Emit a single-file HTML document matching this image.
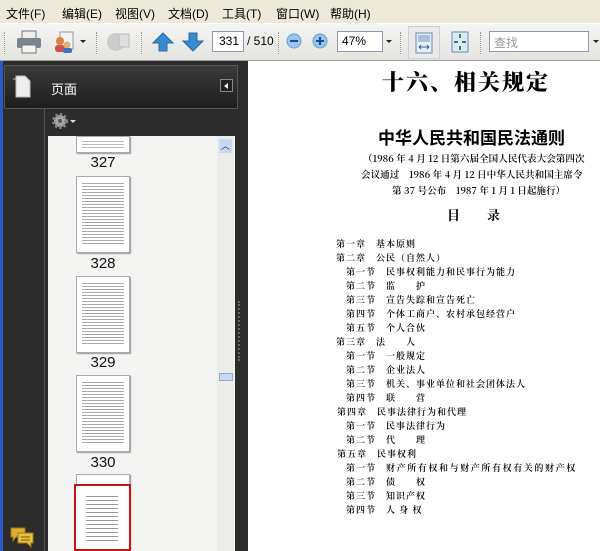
<!DOCTYPE html>
<html><head><meta charset="utf-8"><style>
*{margin:0;padding:0;box-sizing:border-box}
body{width:600px;height:551px;overflow:hidden;position:relative;background:#fff;font-family:"Liberation Sans","Noto Sans CJK SC",sans-serif}
.abs{position:absolute}
#menu{left:0;top:0;width:600px;height:24px;background:#ece9d8;font-size:12px;color:#000;border-bottom:1px solid #fff}
#menu span{position:absolute;top:5px}
#tb{left:0;top:24px;width:600px;height:37px;background:linear-gradient(#f4f4f2,#e4e4e0);border-bottom:1px solid #a0a0a0}
.box{background:#fff;border:1px solid #8a9bb0;font-size:12px;padding:2px 4px}
.sep{width:2px;height:22px;top:8px;border-left:1px dotted #999}
#dark{left:0;top:61px;width:248px;height:490px;background:#2c2c2c}
.th{background:#fff;border:1px solid #aaa;box-shadow:1px 1px 1px #999}
.lab{font-size:15px;color:#111;width:54px;text-align:center}
#doc{font-family:"Noto Serif CJK SC","Noto Sans CJK SC",serif;color:#000}
.t{position:absolute;font-size:9px;letter-spacing:1px;white-space:nowrap;font-weight:600}
.sub{position:absolute;font-size:9.6px;white-space:nowrap;font-weight:600}
</style></head><body>
<div id="menu" class="abs">
<span style="left:6px">文件(F)</span><span style="left:62px">编辑(E)</span><span style="left:115px">视图(V)</span><span style="left:168px">文档(D)</span><span style="left:222px">工具(T)</span><span style="left:276px">窗口(W)</span><span style="left:330px">帮助(H)</span>
</div>
<div id="tb" class="abs">
 <div class="abs sep" style="left:4px"></div>
 <svg class="abs" style="left:16px;top:6px" width="26" height="24"><rect x="6" y="1" width="14" height="8" fill="#eee" stroke="#777"/><rect x="1" y="8" width="24" height="10" rx="2" fill="#7a8590"/><rect x="6" y="15" width="14" height="8" fill="#f4f4f4" stroke="#777"/></svg>
 <svg class="abs" style="left:52px;top:6px" width="24" height="24"><rect x="8" y="2" width="13" height="17" fill="#f2f2f2" stroke="#999"/><circle cx="8" cy="11" r="4" fill="#e08040"/><rect x="3" y="15" width="10" height="7" rx="3" fill="#d05050"/><circle cx="15" cy="15" r="3.5" fill="#e0b070"/><rect x="11" y="18" width="9" height="5" rx="2" fill="#4070c0"/></svg>
 <div class="abs" style="left:80px;top:16px;border:3px solid transparent;border-top:3px solid #222"></div>
 <div class="abs sep" style="left:96px"></div>
 <svg class="abs" style="left:105px;top:6px" width="26" height="24"><circle cx="11" cy="12" r="9" fill="#ccc"/><rect x="14" y="4" width="10" height="13" fill="#ddd" stroke="#bbb"/></svg>
 <div class="abs sep" style="left:141px"></div>
 <svg class="abs" style="left:152px;top:8px" width="22" height="20"><path d="M11 1 L21 11 H15 V19 H7 V11 H1 Z" fill="#3a8ad0" stroke="#2a6aa8"/></svg>
 <svg class="abs" style="left:182px;top:8px" width="22" height="20"><path d="M11 19 L21 9 H15 V1 H7 V9 H1 Z" fill="#3a8ad0" stroke="#2a6aa8"/></svg>
 <div class="abs box" style="left:212px;top:7px;width:32px;height:21px;text-align:right">331</div>
 <div class="abs" style="left:247px;top:10px;font-size:12px">/ 510</div>
 <div class="abs sep" style="left:278px"></div>
 <svg class="abs" style="left:286px;top:9px" width="16" height="16"><circle cx="8" cy="8" r="7" fill="#9cc4ec" stroke="#6a9ed0"/><rect x="4" y="7" width="8" height="2" fill="#1a4a90"/></svg>
 <svg class="abs" style="left:312px;top:9px" width="16" height="16"><circle cx="8" cy="8" r="7" fill="#9cc4ec" stroke="#6a9ed0"/><rect x="4" y="7" width="8" height="2" fill="#1a4a90"/><rect x="7" y="4" width="2" height="8" fill="#1a4a90"/></svg>
 <div class="abs box" style="left:337px;top:7px;width:46px;height:21px">47%</div>
 <div class="abs" style="left:386px;top:16px;border:3px solid transparent;border-top:3px solid #222"></div>
 <div class="abs sep" style="left:400px"></div>
 <div class="abs" style="left:408px;top:2px;width:32px;height:33px;background:#eaeaea;border:1px solid #d0d0d0"></div>
 <svg class="abs" style="left:415px;top:8px" width="18" height="22"><rect x="1" y="1" width="16" height="20" fill="#e8eef6" stroke="#6a8ab0"/><rect x="3" y="3" width="12" height="7" fill="#a8c0dc"/><path d="M4 15 H14 M4 15 l2-2 M4 15 l2 2 M14 15 l-2-2 M14 15 l-2 2" stroke="#3060a0"/></svg>
 <svg class="abs" style="left:451px;top:7px" width="18" height="22"><rect x="1" y="1" width="16" height="20" fill="#dde8f2" stroke="#6a8ab0"/><path d="M9 3 v4 M9 15 v4 M3 11 h4 M11 11 h4" stroke="#2a8a5a" stroke-width="2"/></svg>
 <div class="abs sep" style="left:480px"></div>
 <div class="abs box" style="left:489px;top:7px;width:100px;height:21px;color:#999">查找</div>
 <div class="abs" style="left:593px;top:16px;border:3px solid transparent;border-top:3px solid #222"></div>
</div>
<div id="dark" class="abs">
 <div class="abs" style="left:0;top:0;width:3px;height:490px;background:#2a5ac8"></div>
 <div class="abs" style="left:4px;top:4px;width:234px;height:44px;background:linear-gradient(#3a3a3a,#1e1e1e);border:1px solid #555"></div>
 <svg class="abs" style="left:12px;top:14px" width="20" height="24"><path d="M4 1 H13 L18 6 V22 H4 Z" fill="#eee" stroke="#bbb"/><path d="M1 4 H4 V22" fill="none" stroke="#bbb"/></svg>
 <div class="abs" style="left:51px;top:18px;color:#fff;font-size:13px">页面</div>
 <div class="abs" style="left:220px;top:18px;width:13px;height:13px;border:1px solid #888;background:#222"><div style="position:absolute;left:3px;top:3px;border:3px solid transparent;border-right:4px solid #eee;border-left:0"></div></div>
 <div class="abs" style="left:44px;top:48px;width:1px;height:442px;background:#555"></div>
 <svg class="abs" style="left:50px;top:50px" width="20" height="20"><circle cx="10" cy="10" r="6" fill="#aaa" stroke="#888" stroke-width="4" stroke-dasharray="2 2"/><circle cx="10" cy="10" r="2" fill="#555"/></svg>
 <div class="abs" style="left:70px;top:59px;border:3px solid transparent;border-top:3px solid #ddd"></div>
 <div class="abs" style="left:48px;top:75px;width:187px;height:415px;background:#f4f4f2"></div>
 <div class="abs" style="left:217px;top:75px;width:17px;height:415px;background:#ecece8"></div>
 <div class="abs" style="left:219px;top:78px;width:13px;height:14px;background:#c8d8f4;color:#234;font-size:9px;text-align:center">︿</div>
 <div class="abs" style="left:219px;top:312px;width:14px;height:8px;background:#c8d8f4;border:1px solid #9ab"></div>
 <div class="abs" style="left:238px;top:240px;width:4px;height:60px;border-left:2px dotted #666"></div>
 <div class="abs th" style="left:76px;top:75px;width:54px;height:17px"></div>
 <div class="abs lab" style="left:76px;top:93px">327</div>
 <div class="abs th" style="left:76px;top:115px;width:54px;height:77px"></div>
 <div class="abs lab" style="left:76px;top:194px">328</div>
 <div class="abs th" style="left:76px;top:215px;width:54px;height:77px"></div>
 <div class="abs lab" style="left:76px;top:293px">329</div>
 <div class="abs th" style="left:76px;top:314px;width:54px;height:77px"></div>
 <div class="abs lab" style="left:76px;top:393px">330</div>
 <div class="abs th" style="left:76px;top:413px;width:54px;height:77px"></div>
 <div class="abs" style="left:74px;top:423px;width:57px;height:67px;border:2px solid #d01010;background:#fff"></div>
 <svg class="abs" style="left:9px;top:465px" width="26" height="22"><path d="M2 2 H16 V11 H7 L4 15 V11 H2 Z" fill="#d8b030" stroke="#a07810"/><path d="M9 7 H24 V17 H22 V21 L18 17 H9 Z" fill="#e8c040" stroke="#a07810"/><path d="M12 11 H21 M12 14 H21" stroke="#7a5a00"/></svg>
</div>
<div class="abs" style="left:82px;top:140px;width:42px;height:10px;background:repeating-linear-gradient(#fff 0 1px,#bbb 1px 2px,#fff 2px 3px)"></div>
<div class="abs" style="left:82px;top:182px;width:42px;height:62px;background:repeating-linear-gradient(#fff 0 1px,#aaa 1px 2px,#fff 2px 3px)"></div>
<div class="abs" style="left:82px;top:282px;width:42px;height:62px;background:repeating-linear-gradient(#fff 0 1px,#aaa 1px 2px,#fff 2px 3px)"></div>
<div class="abs" style="left:82px;top:381px;width:42px;height:62px;background:repeating-linear-gradient(#fff 0 1px,#aaa 1px 2px,#fff 2px 3px)"></div>
<div class="abs" style="left:86px;top:494px;width:32px;height:50px;background:repeating-linear-gradient(#fff 0 2px,#999 2px 3px,#fff 3px 4px)"></div>
<div id="doc">
<div class="abs" style="left:382px;top:66px;font-size:22px;font-weight:900;letter-spacing:2px">十六、相关规定</div>
<div class="abs" style="left:378px;top:124px;font-size:17px;font-weight:bold;font-family:'Noto Sans CJK SC',sans-serif">中华人民共和国民法通则</div>
<div class="sub" style="left:363px;top:151px">（1986 年 4 月 12 日第六届全国人民代表大会第四次</div>
<div class="sub" style="left:361px;top:167px">会议通过　1986 年 4 月 12 日中华人民共和国主席令</div>
<div class="sub" style="left:392px;top:183px">第 37 号公布　1987 年 1 月 1 日起施行）</div>
<div class="abs" style="left:447px;top:205px;font-size:13px;font-weight:bold">目</div>
<div class="abs" style="left:487px;top:205px;font-size:13px;font-weight:bold">录</div>

<div class="t" style="left:336px;top:237px">第一章</div><div class="t" style="left:376px;top:237px">基本原则</div>
<div class="t" style="left:336px;top:251px">第二章</div><div class="t" style="left:376px;top:251px">公民（自然人）</div>
<div class="t" style="left:346px;top:265px">第一节</div><div class="t" style="left:386px;top:265px">民事权利能力和民事行为能力</div>
<div class="t" style="left:346px;top:279px">第二节</div><div class="t" style="left:386px;top:279px">监　　护</div>
<div class="t" style="left:346px;top:293px">第三节</div><div class="t" style="left:386px;top:293px">宣告失踪和宣告死亡</div>
<div class="t" style="left:346px;top:307px">第四节</div><div class="t" style="left:386px;top:307px">个体工商户、农村承包经营户</div>
<div class="t" style="left:346px;top:321px">第五节</div><div class="t" style="left:386px;top:321px">个人合伙</div>
<div class="t" style="left:336px;top:335px">第三章</div><div class="t" style="left:376px;top:335px">法　　人</div>
<div class="t" style="left:346px;top:349px">第一节</div><div class="t" style="left:386px;top:349px">一般规定</div>
<div class="t" style="left:346px;top:363px">第二节</div><div class="t" style="left:386px;top:363px">企业法人</div>
<div class="t" style="left:346px;top:377px">第三节</div><div class="t" style="left:386px;top:377px">机关、事业单位和社会团体法人</div>
<div class="t" style="left:346px;top:391px">第四节</div><div class="t" style="left:386px;top:391px">联　　营</div>
<div class="t" style="left:337px;top:405px">第四章</div><div class="t" style="left:377px;top:405px">民事法律行为和代理</div>
<div class="t" style="left:346px;top:419px">第一节</div><div class="t" style="left:386px;top:419px">民事法律行为</div>
<div class="t" style="left:346px;top:433px">第二节</div><div class="t" style="left:386px;top:433px">代　　理</div>
<div class="t" style="left:337px;top:447px">第五章</div><div class="t" style="left:377px;top:447px">民事权利</div>
<div class="t" style="left:346px;top:461px">第一节</div><div class="t" style="left:386px;top:461px;letter-spacing:1.6px">财产所有权和与财产所有权有关的财产权</div>
<div class="t" style="left:346px;top:475px">第二节</div><div class="t" style="left:386px;top:475px">债　　权</div>
<div class="t" style="left:346px;top:489px">第三节</div><div class="t" style="left:386px;top:489px">知识产权</div>
<div class="t" style="left:346px;top:503px">第四节</div><div class="t" style="left:386px;top:503px">人 身 权</div>
</div>
</body></html>
